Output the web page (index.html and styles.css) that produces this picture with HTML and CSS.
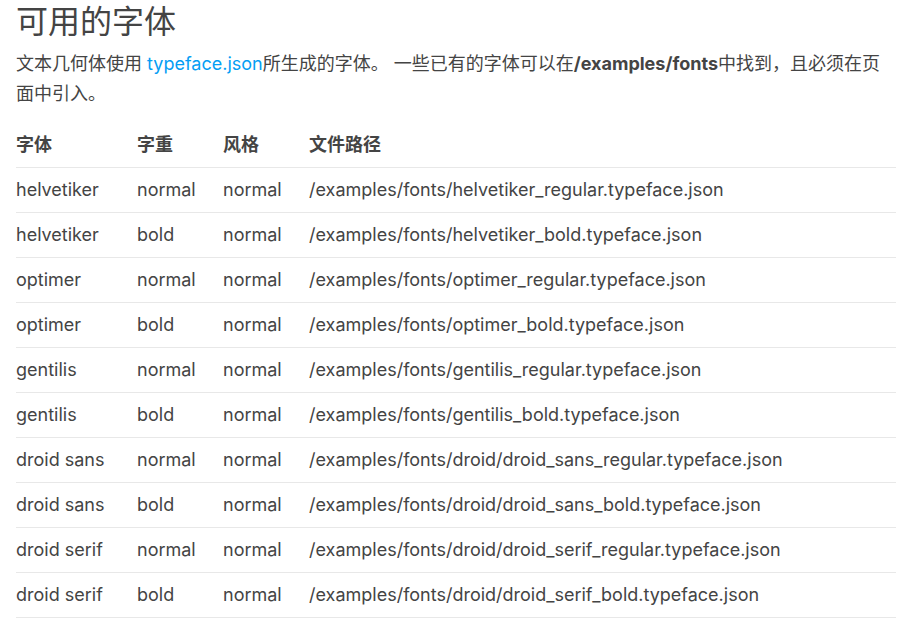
FILE: index.html
```html
<!DOCTYPE html>
<html lang="zh-CN">
<head>
  <meta charset="UTF-8">
  <title>可用的字体</title>
  <meta name="viewport" content="width=device-width, initial-scale=1.0">
  <link rel="stylesheet" href="styles.css">
</head>
<body>
  <h1>可用的字体</h1>
  <p class="intro">
    文本几何体使用 <a href="#">typeface.json</a>所生成的字体。
    一些已有的字体可以在<b>/examples/fonts</b>中找到，且必须在页面中引入。
  </p>

  <table class="font-table">
    <thead>
      <tr>
        <th class="col-name">字体</th>
        <th class="col-weight">字重</th>
        <th class="col-style">风格</th>
        <th>文件路径</th>
      </tr>
    </thead>
    <tbody>
      <tr><td>helvetiker</td><td>normal</td><td>normal</td><td>/examples/fonts/helvetiker_regular.typeface.json</td></tr>
      <tr><td>helvetiker</td><td>bold</td><td>normal</td><td>/examples/fonts/helvetiker_bold.typeface.json</td></tr>
      <tr><td>optimer</td><td>normal</td><td>normal</td><td>/examples/fonts/optimer_regular.typeface.json</td></tr>
      <tr><td>optimer</td><td>bold</td><td>normal</td><td>/examples/fonts/optimer_bold.typeface.json</td></tr>
      <tr><td>gentilis</td><td>normal</td><td>normal</td><td>/examples/fonts/gentilis_regular.typeface.json</td></tr>
      <tr><td>gentilis</td><td>bold</td><td>normal</td><td>/examples/fonts/gentilis_bold.typeface.json</td></tr>
      <tr><td>droid sans</td><td>normal</td><td>normal</td><td>/examples/fonts/droid/droid_sans_regular.typeface.json</td></tr>
      <tr><td>droid sans</td><td>bold</td><td>normal</td><td>/examples/fonts/droid/droid_sans_bold.typeface.json</td></tr>
      <tr><td>droid serif</td><td>normal</td><td>normal</td><td>/examples/fonts/droid/droid_serif_regular.typeface.json</td></tr>
      <tr><td>droid serif</td><td>bold</td><td>normal</td><td>/examples/fonts/droid/droid_serif_bold.typeface.json</td></tr>
    </tbody>
  </table>
</body>
</html>
```

FILE: styles.css
```css
body {
  font-family: Inter, "Noto Sans CJK SC", sans-serif;
  font-size: 18px;
  color: #444;
  background: #fff;
  margin: 0;
  padding: 0 13px 0 16px;
}
h1 {
  font-size: 32px;
  font-weight: normal;
  line-height: 44px;
  margin: 0;
}
.intro {
  line-height: 30px;
  margin: 5px 0 14px;
}
.intro a {
  color: #049ef4;
  text-decoration: none;
}
.intro b {
  font-weight: bold;
}
.font-table {
  width: 100%;
  border-collapse: collapse;
  table-layout: fixed;
}
.font-table th,
.font-table td {
  text-align: left;
  padding: 8px 0;
  line-height: 28px;
  border-bottom: 1px solid #e8e8e8;
  white-space: nowrap;
}
.font-table th {
  font-weight: bold;
}
.col-name {
  width: 121px;
}
.col-weight {
  width: 86px;
}
.col-style {
  width: 86px;
}
```
